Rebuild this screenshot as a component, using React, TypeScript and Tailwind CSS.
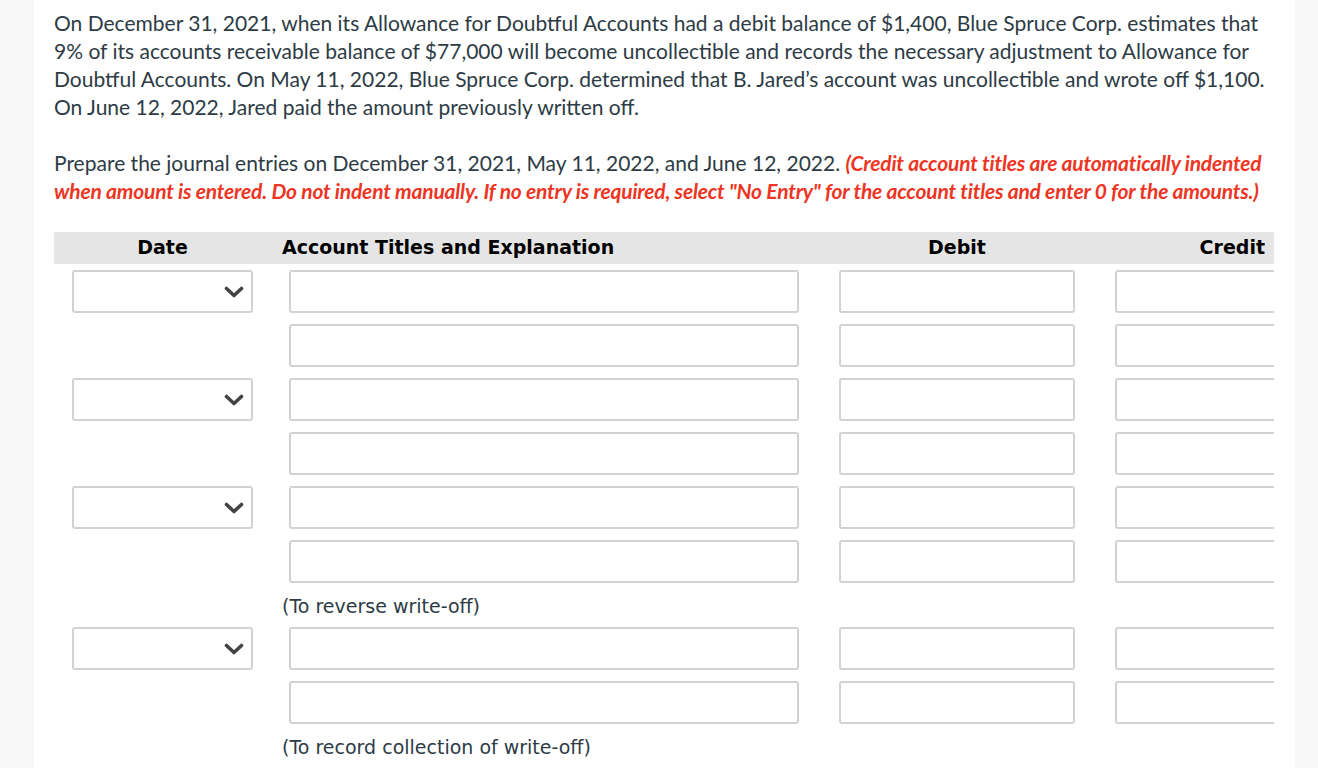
const rows = [
  { select: true },
  { select: false },
  { select: true },
  { select: false },
  { select: true },
  { select: false, note: '(To reverse write-off)' },
  { select: true },
  { select: false, note: '(To record collection of write-off)' },
];

function Box({ className }: { className: string }) {
  return <div className={`h-[43px] rounded-[3px] border-2 border-[#d2d2d2] bg-white ${className}`} />;
}

function Chevron() {
  return (
    <svg width="20" height="12" viewBox="0 0 20 12" className="text-[#444444]">
      <polyline points="2.5,2.5 10,9.5 17.5,2.5" fill="none" stroke="currentColor" strokeWidth="3.6" strokeLinecap="round" strokeLinejoin="round" />
    </svg>
  );
}

export default function App() {
  return (
    <div className="min-h-screen bg-[#f8f8f8]">
      <div className="ml-[34px] w-[1261px] min-h-[768px] bg-white pl-[20px] pr-[21px] pt-[9px]" style={{ fontFamily: 'Lato, "Noto Sans", sans-serif' }}>
        <p className="whitespace-nowrap text-[21px] leading-[28px] text-[#2d3b45]">
          On December 31, 2021, when its Allowance for Doubtful Accounts had a debit balance of $1,400, Blue Spruce Corp. estimates that
          <br />
          9% of its accounts receivable balance of $77,000 will become uncollectible and records the necessary adjustment to Allowance for
          <br />
          Doubtful Accounts. On May 11, 2022, Blue Spruce Corp. determined that B. Jared’s account was uncollectible and wrote off $1,100.
          <br />
          On June 12, 2022, Jared paid the amount previously written off.
        </p>

        <p className="mt-[28px] whitespace-nowrap text-[21px] leading-[28px] text-[#2d3b45]">
          Prepare the journal entries on December 31, 2021, May 11, 2022, and June 12, 2022.{' '}
          <span className="font-bold italic tracking-[-0.2px] text-[#ee3524]">
            (Credit account titles are automatically indented
            <br />
            when amount is entered. Do not indent manually. If no entry is required, select "No Entry" for the account titles and enter 0 for the amounts.)
          </span>
        </p>

        <div className="mt-[27px] w-[1220px] overflow-hidden" style={{ fontFamily: '"DejaVu Sans", Verdana, sans-serif' }}>
          <div className="grid h-[32px] grid-cols-[217px_546px_276px_181px] items-center bg-[#e5e5e5] pb-[1px] text-[19px] font-bold text-black">
            <div className="text-center">Date</div>
            <div className="pl-[11px]">Account Titles and Explanation</div>
            <div className="pl-[4px] text-center">Debit</div>
            <div className="pr-[9px] text-right">Credit</div>
          </div>

          <div className="pt-[6px]">
            {rows.map((r, i) => (
              <div key={i}>
                <div className="grid grid-cols-[217px_546px_276px_181px] pb-[11px]">
                  <div className="pl-[18px]">
                    {r.select && (
                      <div className="flex h-[43px] w-[181px] items-center justify-end rounded-[3px] border-2 border-[#d2d2d2] bg-white pr-[7px]">
                        <Chevron />
                      </div>
                    )}
                  </div>
                  <div className="pl-[18px]">
                    <Box className="w-[510px]" />
                  </div>
                  <div className="pl-[22px]">
                    <Box className="w-[236px]" />
                  </div>
                  <div className="pl-[22px]">
                    <Box className="w-[220px]" />
                  </div>
                </div>
                {r.note && (
                  <div className="mb-[9px] pl-[228px] text-[19px] leading-[24px] text-[#2d3b45]">{r.note}</div>
                )}
              </div>
            ))}
          </div>
        </div>
      </div>
    </div>
  );
}
